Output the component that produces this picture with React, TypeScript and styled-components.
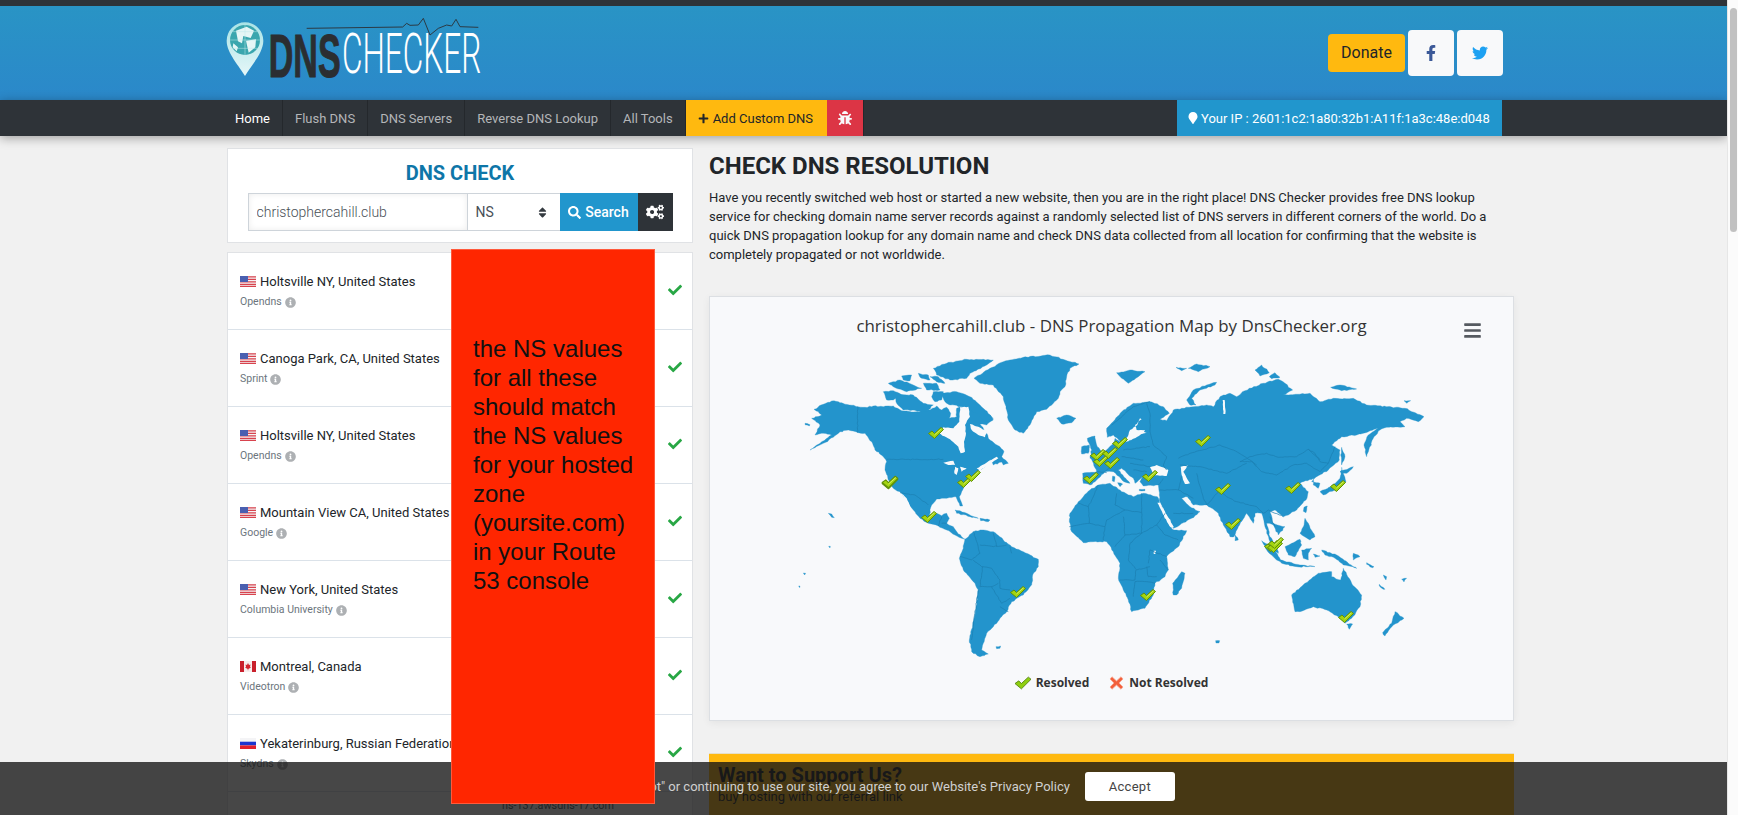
import React from "react";
import styled, { createGlobalStyle } from "styled-components";
import { FaBars, FaBug, FaCheck, FaCogs, FaFacebookF, FaInfoCircle, FaMapMarker, FaPlus, FaSearch, FaSort, FaTwitter } from "react-icons/fa";

const GlobalStyle = createGlobalStyle`
  html, body {
    margin: 0;
    height: 100%;
    overflow: hidden;
  }
  body {
    font-family: Roboto, "Liberation Sans", sans-serif;
    color: #212529;
    background: #f1f1f1;
  }
  * {
    box-sizing: border-box;
  }
`;

const Shell = styled.div`
  display: flex;
  width: 1738px;
  height: 815px;
  overflow: hidden;
`;
const Page = styled.div`
  position: relative;
  width: 1727px;
  height: 815px;
  overflow: hidden;
  background: #f1f1f1;
`;
const ScrollTrack = styled.div`
  width: 11px;
  padding: 8px 1px 0 2px;
  background: #fbfbfb;
  border-left: 1px solid #e6e6e6;
`;
const ScrollThumb = styled.div`
  height: 224px;
  border-radius: 4px;
  background: #c1c1c1;
`;

const Header = styled.header`
  display: flex;
  justify-content: space-between;
  height: 100px;
  padding: 4px 224px 0 226px;
  border-top: 6px solid #2e3338;
  background: linear-gradient(180deg, #2994c5, #2b88ca);
`;
const Logo = styled.svg`
  display: block;
  width: 260px;
  height: 80px;
  overflow: visible;
`;
const HeaderActions = styled.div`
  display: flex;
  align-items: center;
  gap: 3px;
  height: 46px;
  margin-top: 20px;
`;
const DonateButton = styled.div`
  display: flex;
  align-items: center;
  justify-content: center;
  width: 77px;
  height: 38px;
  padding-bottom: 2px;
  border-radius: 4px;
  background: #ffb90f;
  font-size: 16px;
  color: #212529;
`;
const SocialButton = styled.div<{ $color: string }>`
  display: flex;
  align-items: center;
  justify-content: center;
  width: 46px;
  height: 46px;
  border-radius: 4px;
  background: #f8f9fa;
  color: ${(p) => p.$color};
  font-size: 16px;
`;

const Nav = styled.nav`
  position: relative;
  display: flex;
  height: 36px;
  padding: 0 225px 0 227px;
  background: #2e3338;
  box-shadow: 0 2px 10px rgba(0, 0, 0, 0.35);
`;
const NavItem = styled.div<{ $active?: boolean }>`
  display: flex;
  align-items: center;
  padding: 0 12px;
  border-right: 1px solid #24282c;
  font-size: 13px;
  color: ${(p) => (p.$active ? "#ffffff" : "#b4b6b8")};
  &:first-child {
    padding: 0 12px 0 8px;
  }
`;
const NavCustom = styled.div`
  display: flex;
  align-items: center;
  gap: 4px;
  width: 141px;
  padding-left: 12px;
  background: #ffb90f;
  font-size: 13px;
  color: #212529;
`;
const NavBug = styled.div`
  display: flex;
  align-items: center;
  justify-content: center;
  width: 37px;
  border-right: 1px solid #24282c;
  background: #dc3545;
  color: #f8f9fa;
  font-size: 14px;
`;
const IpBox = styled.div`
  display: flex;
  align-items: center;
  gap: 2px;
  width: 325px;
  margin-left: auto;
  padding-left: 10px;
  background: #2196cd;
  font-size: 13px;
  color: #ffffff;
`;

const Main = styled.main`
  display: grid;
  grid-template-columns: 466px 805px;
  gap: 16px;
  padding: 12px 0 0 227px;
`;
const LeftColumn = styled.div`
  display: flex;
  flex-direction: column;
  gap: 9px;
`;
const SearchCard = styled.section`
  display: flex;
  flex-direction: column;
  align-items: center;
  height: 95px;
  padding-top: 13px;
  border: 1px solid #e0e2e5;
  background: #ffffff;
`;
const SearchTitle = styled.h2`
  margin: 0 0 8px;
  font-size: 20px;
  line-height: 23px;
  font-weight: 700;
  color: #0e76a8;
`;
const SearchRow = styled.div`
  display: flex;
  width: 425px;
  height: 38px;
`;
const DomainInput = styled.input`
  width: 220px;
  height: 38px;
  padding: 0 8px;
  border: 1px solid #ced4da;
  border-right-width: 1px;
  outline: 0;
  box-shadow: inset 0 0 6px rgba(0, 0, 0, 0.08);
  font-family: Roboto, sans-serif;
  font-size: 14px;
  font-weight: 300;
  color: #495057;
`;
const RecordSelect = styled.div`
  display: flex;
  align-items: center;
  justify-content: space-between;
  width: 92px;
  padding: 0 11px 0 8px;
  border-top: 1px solid #ced4da;
  border-bottom: 1px solid #ced4da;
  font-size: 14px;
  color: #495057;
  svg {
    font-size: 13px;
    color: #343a40;
  }
`;
const SearchButton = styled.div`
  display: flex;
  align-items: center;
  justify-content: center;
  gap: 4px;
  width: 78px;
  background: #2196cd;
  font-size: 14px;
  font-weight: 500;
  color: #ffffff;
`;
const OptionsButton = styled.div`
  display: flex;
  align-items: center;
  justify-content: center;
  width: 35px;
  background: #2e3338;
  color: #ffffff;
  font-size: 18px;
`;
const Results = styled.section`
  border: 1px solid #e0e2e5;
  border-bottom: 0;
  background: #ffffff;
`;
const ResultRow = styled.div`
  display: grid;
  grid-template-columns: 240px 180px 1fr;
  height: 77px;
  border-bottom: 1px solid #dbe2e9;
`;
const Location = styled.div`
  padding: 20px 0 0 12px;
  white-space: nowrap;
`;
const PlaceName = styled.div`
  display: flex;
  align-items: center;
  gap: 4px;
  height: 17px;
  font-size: 13px;
  color: #212529;
`;
const Provider = styled.div`
  display: flex;
  align-items: center;
  gap: 3px;
  margin-top: 5px;
  font-size: 10.5px;
  line-height: 14px;
  color: #6c757d;
  svg {
    font-size: 11px;
    color: #adb0b3;
  }
`;
const RecordValue = styled.div`
  padding-top: 6px;
  text-align: center;
  font-size: 10.8px;
  line-height: 16px;
  color: #495057;
`;
const Status = styled.div`
  display: flex;
  align-items: center;
  padding: 0 0 2px 20px;
  font-size: 14px;
  color: #28a745;
`;

const RightColumn = styled.div`
  display: flex;
  flex-direction: column;
`;
const PageTitle = styled.h1`
  margin: 4px 0 8px;
  font-size: 24px;
  line-height: 28px;
  font-weight: 700;
  color: #212529;
`;
const Intro = styled.p`
  margin: 0 0 32px;
  font-size: 13px;
  line-height: 19px;
  color: #212529;
`;
const MapCard = styled.section`
  position: relative;
  height: 425px;
  padding-top: 17px;
  border: 1px solid #dcdfe3;
  background: #f8f9fb;
  box-shadow: 0 2px 8px rgba(0, 0, 0, 0.06);
`;
const ChartTitle = styled.div`
  margin-bottom: 12px;
  text-align: center;
  font-family: "Open Sans", sans-serif;
  font-size: 16.9px;
  line-height: 24px;
  color: #333333;
`;
const ChartMenu = styled.div`
  position: absolute;
  top: 24px;
  right: 31px;
  display: flex;
  color: #555a60;
  font-size: 19px;
`;
const WorldSvg = styled.svg`
  display: block;
  width: 640px;
  height: 320px;
  margin-left: 80px;
`;
const Legend = styled.div`
  display: flex;
  justify-content: center;
  gap: 20px;
  margin-top: 5px;
  font-family: "Open Sans", sans-serif;
  font-size: 12px;
  font-weight: 700;
  line-height: 16px;
  color: #333333;
`;
const LegendItem = styled.div`
  display: flex;
  align-items: center;
  gap: 5px;
`;
const SupportBox = styled.section`
  height: 120px;
  margin-top: 32px;
  padding: 9px 9px 0;
  border-top: 1px solid #e6e0c8;
  background: #ffb90f;
`;
const SupportTitle = styled.h3`
  margin: 0;
  font-size: 20px;
  line-height: 24px;
  font-weight: 700;
  color: #212529;
`;
const SupportText = styled.p`
  margin: 0;
  font-size: 13px;
  line-height: 20px;
  color: #212529;
`;

const CookieBar = styled.div`
  position: absolute;
  left: 0;
  right: 0;
  bottom: 0;
  z-index: 2;
  display: flex;
  align-items: center;
  justify-content: center;
  gap: 15px;
  height: 53px;
  padding-bottom: 4px;
  background: rgba(22, 22, 22, 0.79);
  font-size: 13px;
  color: #d0d0d0;
`;
const AcceptButton = styled.div`
  display: flex;
  align-items: center;
  justify-content: center;
  width: 90px;
  height: 29px;
  border-radius: 3px;
  background: #ffffff;
  font-size: 13px;
  letter-spacing: 0.3px;
  color: #444444;
`;
const RedNote = styled.div`
  position: absolute;
  top: 249px;
  left: 451px;
  z-index: 3;
  width: 204px;
  height: 555px;
  padding: 84px 6px 0 21px;
  border: 1px solid #ff5a3c;
  background: #ff2600;
  font-family: "Liberation Sans", Arial, sans-serif;
  font-size: 24px;
  line-height: 29px;
  color: #111111;
`;

const LAND = "#2394cc";
const LINE = "#1b7fb2";
const SEA = "#f8f9fb";

// breaks the long straight edges into short jittered steps, so the coast looks traced
const rough = (d: string, amp: number) => {
  let seed = d.length * 13 + 7;
  const rnd = () => {
    seed = (seed * 9301 + 49297) % 233280;
    return seed / 233280 - 0.5;
  };
  return d
    .split(/(?=M)/)
    .map((sub) => {
      const closed = sub.includes("Z");
      const pts = sub
        .replace(/[MLZ]/g, " ")
        .trim()
        .split(/\s+/)
        .map((p) => p.split(",").map(Number));
      if (closed) pts.push(pts[0]);
      const out: string[] = [`M${pts[0][0]},${pts[0][1]}`];
      for (let i = 1; i < pts.length; i++) {
        const [x0, y0] = pts[i - 1];
        const [x1, y1] = pts[i];
        const len = Math.hypot(x1 - x0, y1 - y0);
        const steps = Math.max(1, Math.round(len / 7));
        for (let k = 1; k <= steps; k++) {
          const t = k / steps;
          const j = k === steps ? 0 : amp;
          out.push(`L${(x0 + (x1 - x0) * t + rnd() * j).toFixed(1)},${(y0 + (y1 - y0) * t + rnd() * j).toFixed(1)}`);
        }
      }
      return out.join(" ") + (closed ? " Z" : "");
    })
    .join(" ");
};

const westLand = [
  "M72,178 L100,163 L125,153 L150,158 L178,165 L203,170 L225,172 L250,168 L280,170 L310,168 L335,182 L365,186 L400,183 L420,180 L440,168 L455,180 L470,172 L482,190 L478,205 L500,200 L500,175 L530,165 L555,175 L575,190 L600,195 L610,210 L590,225 L570,222 L590,250 L600,270 L630,290 L642,305 L635,320 L655,340 L640,345 L625,320 L600,330 L585,350 L560,365 L545,385 L530,395 L515,425 L508,440 L518,468 L510,468 L498,440 L470,445 L440,447 L425,465 L418,495 L440,490 L455,497 L470,490 L478,505 L470,520 L490,530 L505,552 L525,568 L515,565 L495,555 L470,540 L445,528 L415,520 L390,505 L370,480 L345,445 L330,425 L310,415 L295,390 L285,360 L290,335 L280,320 L255,300 L245,275 L225,250 L205,248 L175,240 L150,245 L130,262 L100,280 L60,300 L95,275 L125,255 L100,250 L75,255 L90,225 L65,205 L95,195 Z",
  "M450,130 L500,125 L540,140 L570,165 L610,205 L585,215 L560,190 L520,170 L480,165 L465,155 Z",
  "M430,55 L470,40 L530,28 L610,30 L590,45 L540,70 L530,85 L480,90 L440,75 Z",
  "M315,135 L370,135 L400,160 L430,165 L410,185 L340,180 L320,160 Z",
  "M280,125 L310,122 L335,135 L310,150 L290,150 Z",
  "M295,100 L330,90 L370,105 L395,115 L350,125 L310,110 Z",
  "M385,70 L415,75 L420,90 L395,85 Z M400,100 L440,100 L450,120 L410,120 Z M430,125 L460,125 L455,150 L435,155 L425,140 Z M420,80 L445,80 L465,100 L440,95 Z M335,78 L365,75 L360,92 L340,90 Z",
  "M600,325 L630,315 L640,335 L610,345 Z",
  "M495,480 L530,490 L565,505 L540,500 L500,490 Z M570,505 L600,510 L595,515 L572,512 Z",
  "M115,490 L125,492 L133,503 L125,502 Z M45,220 L60,224 L58,228 L46,225 Z",
  "M552,85 L600,55 L640,35 L700,22 L780,15 L867,42 L840,55 L830,80 L825,110 L810,125 L805,145 L790,160 L770,178 L740,185 L720,225 L700,250 L675,240 L655,210 L648,175 L640,140 L610,105 L570,100 Z",
  "M525,568 L550,545 L580,540 L610,545 L640,570 L665,590 L700,605 L745,628 L745,650 L728,675 L725,705 L700,735 L665,755 L650,785 L635,800 L610,830 L590,850 L580,880 L575,900 L595,912 L570,920 L545,905 L538,870 L548,825 L558,770 L565,720 L550,695 L520,660 L508,625 L520,595 Z",
  "M618,890 L632,888 L630,895 L620,896 Z M116,589 L121,589 L120,594 Z M40,669 L47,670 L44,675 Z M26,708 L30,708 L29,713 Z",
];
const westSea = [
  "M510,172 L535,170 L540,200 L525,225 L528,250 L522,275 L525,305 L512,310 L505,290 L480,268 L445,250 L460,232 L490,235 L508,215 Z",
  "M540,222 L565,230 L592,245 L585,262 L565,255 L545,240 Z",
  "M460,338 L490,332 L495,345 L475,345 Z M495,350 L505,355 L500,375 L493,370 Z M510,350 L530,355 L515,365 Z M560,355 L620,320 L625,325 L570,362 Z",
  "M338,432 L350,445 L364,478 L358,478 L344,452 Z",
];
const westLines = [
  "M290,328 L460,328 M203,170 L203,248 M330,428 L375,435 L415,465",
  "M445,528 L455,500 M470,520 L455,520",
  "M550,545 L560,575 L570,610 L545,630 L510,620 M570,585 L610,590 L650,585 M610,550 L620,590 M660,590 L665,610 M550,630 L575,650 L605,655 L630,690 L630,715 L660,720",
  "M565,720 L555,790 L545,870 M578,650 L570,710 L605,710 L625,700 M605,710 L635,760 L660,745 M630,770 L655,785",
];
const centerLand = [
  "M20,205 L50,195 L78,205 L65,218 L35,222 Z",
  "M200,68 L240,60 L285,65 L265,80 L235,100 L215,85 Z M378,52 L410,55 L395,62 Z M415,55 L440,42 L480,50 L445,65 Z",
  "M410,150 L430,120 L470,105 L500,97 L495,105 L450,120 L425,145 L438,165 L420,165 Z",
  "M95,290 L118,285 L115,310 L95,312 Z M112,265 L135,258 L140,285 L155,305 L150,320 L120,325 L125,300 Z",
  "M100,400 L98,370 L140,365 L128,335 L120,320 L150,315 L175,295 L190,280 L195,265 L215,280 L245,270 L265,255 L290,248 L270,240 L245,255 L232,262 L212,275 L190,255 L172,262 L170,235 L180,225 L215,185 L250,160 L300,155 L340,170 L358,190 L330,208 L350,212 L370,180 L395,175 L430,170 L470,165 L490,170 L510,140 L540,130 L560,140 L585,122 L640,100 L685,88 L705,100 L728,120 L700,135 L780,130 L810,155 L850,145 L910,145 L950,165 L1010,170 L1065,175 L1122,200 L1105,215 L1070,205 L1050,215 L1065,230 L1010,232 L990,240 L970,265 L950,320 L942,285 L955,255 L985,235 L940,250 L920,255 L875,260 L845,285 L870,300 L868,330 L835,360 L800,380 L785,395 L810,400 L805,415 L790,405 L790,385 L760,395 L750,400 L775,425 L768,450 L740,480 L715,495 L700,500 L675,480 L660,485 L670,520 L705,530 L685,555 L670,525 L650,520 L660,560 L680,590 L685,610 L670,600 L645,530 L635,490 L615,490 L610,520 L590,490 L565,530 L552,560 L540,560 L520,525 L505,490 L470,465 L430,465 L412,440 L395,445 L420,470 L450,485 L425,505 L370,535 L362,510 L345,490 L328,450 L328,435 L325,405 L280,408 L270,395 L280,375 L255,400 L250,385 L215,355 L205,360 L240,400 L222,395 L190,365 L165,365 L135,395 L120,405 Z",
  "M60,490 L85,455 L120,420 L145,405 L180,400 L215,425 L250,440 L280,430 L322,440 L342,490 L358,528 L372,540 L410,542 L385,590 L350,620 L355,660 L345,680 L315,700 L310,735 L285,775 L245,785 L235,750 L220,720 L205,685 L210,640 L190,605 L170,575 L130,575 L100,578 L65,545 L58,515 Z",
  "M370,735 L368,700 L395,665 L405,670 L395,715 L380,735 Z M555,555 L565,570 L555,572 Z",
  "M188,378 L195,380 L193,395 L187,393 Z M203,398 L218,402 L210,410 Z M268,418 L285,418 L285,422 L268,422 Z M497,872 L509,872 L507,879 L498,879 Z",
];
const centerSea = [
  "M270,205 L262,225 L240,240 L232,262 L215,278 L255,265 L280,250 L285,240 L260,240 L255,225 L275,208 Z",
  "M300,352 L320,345 L355,360 L350,378 L310,375 Z",
  "M392,350 L415,345 L400,365 L420,400 L405,402 L395,375 Z",
  "M322,458 L330,458 L350,495 L372,532 L362,532 L342,498 Z",
  "M311,602 L318,602 L316,612 L311,612 Z",
  "M518,150 L524,150 L526,192 L520,192 Z",
];
const centerLines = [
  "M85,460 L115,470 L118,520 M145,405 L115,470 M200,430 L195,465 L225,480 L275,488 M275,430 L275,488 L275,550 M118,520 L165,530 L170,510 L225,480 M58,530 L118,520 M165,530 L160,570 M220,500 L225,555 L275,550 L320,525 M320,525 L345,555 L385,570 M320,525 L345,490 M225,555 L195,590 M240,580 L275,550 M240,580 L235,630 L260,660 L300,650 M300,600 L350,620 M300,600 L295,640 M210,690 L255,690 L258,660 M255,695 L250,740 M255,695 L290,695 L315,700 M290,650 L295,680 L320,680 M330,630 L355,660",
  "M185,225 L250,170 L300,155 M290,160 L300,190 L300,245 M300,245 L310,285 L350,320 L340,345 L350,360 M220,300 L300,290 M215,320 L280,330 M165,365 L210,330 M140,365 L170,368 M240,340 L300,350 M250,360 L290,365 M340,385 L325,405",
  "M395,380 L385,420 L430,445 M440,370 L460,445 L470,465 M385,325 L420,310 L510,285 L550,300 L600,330 L620,345 M390,345 L450,350 L530,370 L590,340 M330,420 L385,420 M370,490 L430,490 M470,465 L510,420 L530,440 L560,455 L620,470 L640,490",
  "M570,335 L600,320 L650,310 L685,322 L740,320 L775,298 L795,310 L810,335 L835,340 L810,365 L770,340 L730,345 L680,375 L635,365 L605,335 L570,335 M775,298 L810,330 M835,340 L855,290 M640,490 L655,480 L700,500 M660,500 L675,530",
];
const eastLand = [
  "M300,425 L335,410 L360,385 L365,352 L378,395 L345,420 L310,435 Z M360,365 L400,350 L380,370 Z M365,292 L375,320 L365,345 L362,315 Z",
  "M105,60 L125,45 L148,68 L120,78 Z M148,80 L165,68 L180,82 L155,86 Z M332,112 L360,105 L410,117 L365,122 Z",
  "M252,472 L262,468 L258,488 L250,484 Z M255,505 L265,520 L285,560 L270,570 L240,550 L250,530 Z",
  "M195,590 L240,568 L245,585 L225,620 L205,615 Z M125,572 L160,595 L185,635 L170,630 L140,600 Z M180,630 L240,645 L285,650 L230,650 L185,640 Z M245,600 L275,595 L265,610 L265,630 L250,625 Z",
  "M305,600 L350,615 L400,650 L410,655 L370,645 L345,625 L315,615 Z M400,610 L420,620 L400,630 Z M280,612 L300,618 L285,622 Z",
  "M215,735 L255,700 L295,670 L335,665 L335,680 L362,690 L370,655 L395,700 L425,735 L420,770 L395,805 L375,820 L355,800 L320,780 L280,770 L240,785 L225,785 Z M380,822 L398,822 L388,838 Z",
  "M525,785 L552,805 L520,825 L495,858 L488,848 L515,820 Z",
  "M478,703 L495,718 L490,718 L478,708 Z M440,638 L462,650 L458,653 L440,643 Z M545,688 L560,685 L552,696 Z M490,675 L500,680 L498,690 Z M552,152 L572,152 L560,160 Z",
];
const checks: [number, number, number][] = [
  [936, 433, 1], [890, 483, 1.05], [890, 482, 1.05], [965, 482, 1], [973, 476, 1], [929, 517, 1], [1018, 592, 1],
  [1203, 441, 1], [1120, 443, 1], [1098, 455, 1], [1101, 461, 1], [1110, 453, 1], [1112, 463, 1], [1091, 478, 1],
  [1150, 476, 1], [1223, 489, 1], [1233, 524, 1], [1148, 595, 1], [1293, 488, 1], [1338, 486, 1], [1272, 546, 1],
  [1275, 547, 1], [1276, 543, 1], [1346, 617, 1],
];

function MapCheck({ x, y, s }: { x: number; y: number; s: number }) {
  return (
    <g transform={`translate(${x - 7.5 * s} ${y - 6 * s}) scale(${s})`}>
      <path d="M0,6.5 L3.5,4 L6,6.5 L12.5,0.5 L15,2.5 L6,11.5 Z" fill="#a3d40f" stroke="#5f8f0a" strokeWidth="1" strokeLinejoin="round" />
      <path d="M6,8 L13,1.8" stroke="#d4ee74" strokeWidth="0.9" fill="none" />
    </g>
  );
}

function MapRegion({ x, land, sea = [], lines = [] }: { x: number; land: string[]; sea?: string[]; lines?: string[] }) {
  return (
    <g transform={`translate(${x} 350) scale(0.3333)`}>
      {land.map((d) => (
        <path key={d} d={rough(d, 3.4)} fill={LAND} stroke={LAND} strokeWidth="1" />
      ))}
      {sea.map((d) => (
        <path key={d} d={rough(d, 2.4)} fill={SEA} />
      ))}
      {lines.map((d) => (
        <path key={d} d={rough(d, 2.6)} fill="none" stroke={LINE} strokeWidth="2.2" />
      ))}
    </g>
  );
}

function WorldMap() {
  return (
    <WorldSvg viewBox="790 350 640 320">
      <MapRegion x={790} land={westLand} sea={westSea} lines={westLines} />
      <MapRegion x={1050} land={centerLand} sea={centerSea} lines={centerLines} />
      <MapRegion x={1220} land={eastLand} />
      {checks.map(([x, y, s], i) => (
        <MapCheck key={i} x={x} y={y} s={s} />
      ))}
    </WorldSvg>
  );
}

function LogoMark() {
  return (
    <Logo viewBox="48 0 780 240">
      <defs>
        <linearGradient id="pin" x1="0" y1="0" x2="0" y2="1">
          <stop offset="0" stopColor="#a9e3e6" />
          <stop offset="1" stopColor="#e6f7f8" />
        </linearGradient>
        <linearGradient id="rule" x1="0" y1="0" x2="1" y2="0">
          <stop offset="0" stopColor="#ffffff" stopOpacity="0.1" />
          <stop offset="0.4" stopColor="#ffffff" stopOpacity="0.55" />
          <stop offset="1" stopColor="#ffffff" />
        </linearGradient>
      </defs>
      <path d="M105,198 C90,170 50,130 50,92 A55,55 0 1 1 160,92 C160,130 120,170 105,198 Z" fill="url(#pin)" />
      <circle cx="105" cy="90" r="45" fill="#3aa6ae" />
      <path d="M78,62 L110,50 L132,62 L122,84 L100,78 L96,100 L84,94 Z M108,92 L138,88 L136,112 L116,128 Z M70,100 L84,112 L80,124 L68,112 Z" fill="#e6f6f6" />
      <path d="M60,90 H150 M105,45 V135 M68,65 H142 M68,115 H142" stroke="#bfe8ea" strokeWidth="1.5" fill="none" />
      <path d="M150,198 L810,198" stroke="url(#rule)" strokeWidth="5" />
      <path d="M290,55 L578,51 L590,40 L600,46 L625,45 L640,25 L660,75 L685,55 L710,45 L725,48 L738,28 L750,50 L805,52" fill="none" stroke="#2b3a44" strokeWidth="3" />
      <text x="176" y="202" fontFamily="'Liberation Sans', sans-serif" fontWeight="700" fontSize="184" fill="#2b2e31" stroke="#2b2e31" strokeWidth="3" textLength="216" lengthAdjust="spacingAndGlyphs">
        DNS
      </text>
      <text x="396" y="190" fontFamily="Roboto, sans-serif" fontWeight="300" fontSize="164" fill="#ffffff" textLength="418" lengthAdjust="spacingAndGlyphs">
        CHECKER
      </text>
    </Logo>
  );
}

function UsFlag() {
  return (
    <svg width="16" height="11" viewBox="0 0 16 11">
      <rect width="16" height="11" fill="#f4f4f6" />
      <path d="M0,0.8H16M0,3.3H16M0,5.8H16M0,8.3H16M0,10.4H16" stroke="#d8434e" strokeWidth="1.2" />
      <rect width="8" height="6" fill="#4a5fb0" />
    </svg>
  );
}
function CaFlag() {
  return (
    <svg width="16" height="11" viewBox="0 0 16 11">
      <rect width="16" height="11" fill="#f6eeee" />
      <rect width="4" height="11" fill="#c9202c" />
      <rect x="12" width="4" height="11" fill="#c9202c" />
      <path d="M8,2 L9,4 L10.5,3.6 L10,6 L11,6.5 L8.3,8 L8.3,9.2 L7.7,9.2 L7.7,8 L5,6.5 L6,6 L5.5,3.6 L7,4 Z" fill="#d22630" />
    </svg>
  );
}
function RuFlag() {
  return (
    <svg width="16" height="11" viewBox="0 0 16 11">
      <rect width="16" height="3.7" fill="#f4f4f6" />
      <rect y="3.7" width="16" height="3.7" fill="#1c35d0" />
      <rect y="7.4" width="16" height="3.6" fill="#e0202c" />
    </svg>
  );
}

type Server = { place: string; isp: string; flag: React.ReactNode };
const servers: Server[] = [
  { place: "Holtsville NY, United States", isp: "Opendns", flag: <UsFlag /> },
  { place: "Canoga Park, CA, United States", isp: "Sprint", flag: <UsFlag /> },
  { place: "Holtsville NY, United States", isp: "Opendns", flag: <UsFlag /> },
  { place: "Mountain View CA, United States", isp: "Google", flag: <UsFlag /> },
  { place: "New York, United States", isp: "Columbia University", flag: <UsFlag /> },
  { place: "Montreal, Canada", isp: "Videotron", flag: <CaFlag /> },
  { place: "Yekaterinburg, Russian Federation", isp: "Skydns", flag: <RuFlag /> },
];

export default function App() {
  return (
    <Shell>
      <GlobalStyle />
      <Page>
        <Header>
          <LogoMark />
          <HeaderActions>
            <DonateButton>Donate</DonateButton>
            <SocialButton $color="#3b5998">
              <FaFacebookF />
            </SocialButton>
            <SocialButton $color="#1da1f2">
              <FaTwitter />
            </SocialButton>
          </HeaderActions>
        </Header>
        <Nav>
          <NavItem $active>Home</NavItem>
          <NavItem>Flush DNS</NavItem>
          <NavItem>DNS Servers</NavItem>
          <NavItem>Reverse DNS Lookup</NavItem>
          <NavItem>All Tools</NavItem>
          <NavCustom>
            <FaPlus size={11} />
            Add Custom DNS
          </NavCustom>
          <NavBug>
            <FaBug />
          </NavBug>
          <IpBox>
            <FaMapMarker size={12} />
            Your IP : 2601:1c2:1a80:32b1:A11f:1a3c:48e:d048
          </IpBox>
        </Nav>
        <Main>
          <LeftColumn>
            <SearchCard>
              <SearchTitle>DNS CHECK</SearchTitle>
              <SearchRow>
                <DomainInput readOnly value="christophercahill.club" />
                <RecordSelect>
                  NS
                  <FaSort />
                </RecordSelect>
                <SearchButton>
                  <FaSearch size={13} />
                  Search
                </SearchButton>
                <OptionsButton>
                  <FaCogs />
                </OptionsButton>
              </SearchRow>
            </SearchCard>
            <Results>
              {servers.map((s, i) => (
                <ResultRow key={i}>
                  <Location>
                    <PlaceName>
                      {s.flag}
                      {s.place}
                    </PlaceName>
                    <Provider>
                      {s.isp}
                      <FaInfoCircle />
                    </Provider>
                  </Location>
                  <div />
                  <Status>
                    <FaCheck />
                  </Status>
                </ResultRow>
              ))}
              <ResultRow>
                <div />
                <RecordValue>ns-137.awsdns-17.com</RecordValue>
              </ResultRow>
            </Results>
          </LeftColumn>
          <RightColumn>
            <PageTitle>CHECK DNS RESOLUTION</PageTitle>
            <Intro>
              Have you recently switched web host or started a new website, then you are in the right place! DNS Checker provides free DNS lookup service for checking domain name server records against a randomly selected list of DNS servers in different corners of the world. Do a quick DNS propagation lookup for any domain name and check DNS data collected from all location for confirming that the website is completely propagated or not worldwide.
            </Intro>
            <MapCard>
              <ChartTitle>christophercahill.club - DNS Propagation Map by DnsChecker.org</ChartTitle>
              <ChartMenu>
                <FaBars />
              </ChartMenu>
              <WorldMap />
              <Legend>
                <LegendItem>
                  <svg width="16" height="14" viewBox="0 0 15 12">
                    <path d="M0,6.5 L3.5,4 L6,6.5 L12.5,0.5 L15,2.5 L6,11.5 Z" fill="#8fcf10" stroke="#4f7f0a" strokeWidth="0.8" />
                  </svg>
                  Resolved
                </LegendItem>
                <LegendItem>
                  <svg width="15" height="14" viewBox="0 0 15 14">
                    <path d="M1,3 L3,0.8 L7.5,5 L12,0.8 L14,3 L10,7 L14,11 L12,13.2 L7.5,9 L3,13.2 L1,11 L5,7 Z" fill="#f2603c" stroke="#f7a48e" strokeWidth="0.8" />
                  </svg>
                  Not Resolved
                </LegendItem>
              </Legend>
            </MapCard>
            <SupportBox>
              <SupportTitle>Want to Support Us?</SupportTitle>
              <SupportText>buy hosting with our referral link</SupportText>
            </SupportBox>
          </RightColumn>
        </Main>
        <RedNote>
          the NS values
          <br />
          for all these
          <br />
          should match
          <br />
          the NS values
          <br />
          for your hosted
          <br />
          zone
          <br />
          (yoursite.com)
          <br />
          in your Route
          <br />
          53 console
        </RedNote>
        <CookieBar>
          <span>By clicking "Accept" or continuing to use our site, you agree to our Website's Privacy Policy</span>
          <AcceptButton>Accept</AcceptButton>
        </CookieBar>
      </Page>
      <ScrollTrack>
        <ScrollThumb />
      </ScrollTrack>
    </Shell>
  );
}
